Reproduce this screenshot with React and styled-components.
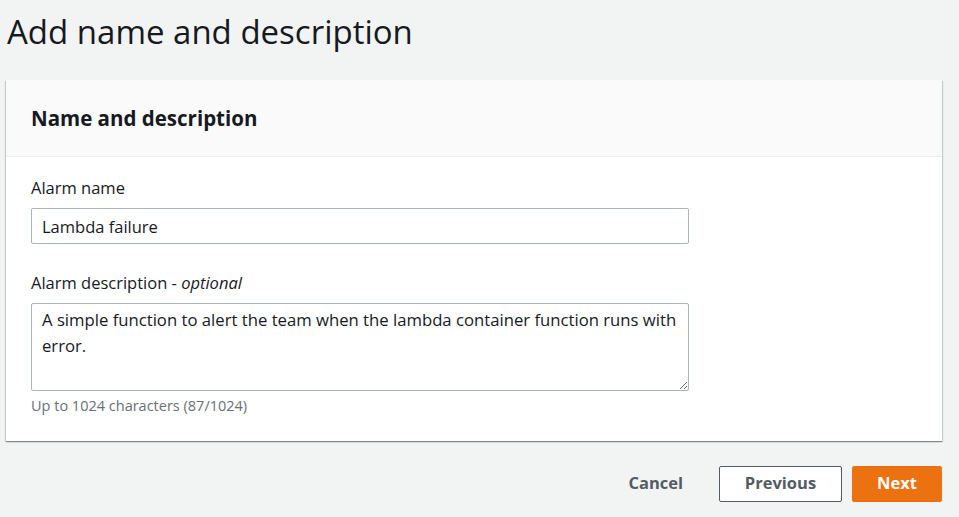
import styled, { createGlobalStyle } from 'styled-components';

const GlobalStyle = createGlobalStyle`
  html, body {
    margin: 0;
    padding: 0;
    background: #f2f3f3;
  }
  body {
    font-family: "Open Sans", Roboto, sans-serif;
    color: #16191f;
  }
  * { box-sizing: border-box; }
`;

export default function App() {
  return (
    <>
      <GlobalStyle />
      <Page>
        <Title>Add name and description</Title>
        <Card>
          <CardHeader>
            <CardTitle>Name and description</CardTitle>
          </CardHeader>
          <CardBody>
            <Field>
              <Label>Alarm name</Label>
              <Input defaultValue="Lambda failure" />
            </Field>
            <Field>
              <Label>
                Alarm description - <em>optional</em>
              </Label>
              <TextArea
                defaultValue="A simple function to alert the team when the lambda container function runs with error."
              />
              <Hint>Up to 1024 characters (87/1024)</Hint>
            </Field>
          </CardBody>
        </Card>
        <Actions>
          <Button variant="link">Cancel</Button>
          <Button variant="normal">Previous</Button>
          <Button variant="primary">Next</Button>
        </Actions>
      </Page>
    </>
  );
}

const Page = styled.div`
  width: 959px;
  height: 517px;
  padding: 12px 17px 0 6px;
  display: flex;
  flex-direction: column;
`;

const Title = styled.h1`
  margin: 0 0 0 1px;
  font-size: 33px;
  font-weight: 400;
  line-height: 40px;
  color: #16191f;
`;

const Card = styled.div`
  margin-top: 28px;
  background: #fff;
  box-shadow: 0 1px 1px 0 rgba(0, 28, 36, 0.3), 1px 1px 1px 0 rgba(0, 28, 36, 0.15),
    -1px 1px 1px 0 rgba(0, 28, 36, 0.15);
  height: 361px;
`;

const CardHeader = styled.div`
  height: 77px;
  background: #fafafa;
  border-bottom: 1px solid #eaeded;
  display: flex;
  align-items: center;
  padding: 0 25px;
`;

const CardTitle = styled.h2`
  margin: 0;
  font-size: 20.5px;
  font-weight: 700;
  color: #16191f;
`;

const CardBody = styled.div`
  padding: 20px 25px;
  display: flex;
  flex-direction: column;
  gap: 28px;
`;

const Field = styled.div`
  display: flex;
  flex-direction: column;
`;

const Label = styled.label`
  font-size: 16.5px;
  line-height: 22px;
  color: #16191f;
  margin-bottom: 9px;

  em {
    font-style: italic;
  }
`;

const Input = styled.input`
  width: 658px;
  height: 36px;
  border: 1px solid #aab7b8;
  border-radius: 2px;
  padding: 0 10px;
  font-family: inherit;
  font-size: 16.5px;
  color: #16191f;
  background: #fff;
  outline: none;
`;

const TextArea = styled.textarea`
  width: 658px;
  height: 88px;
  border: 1px solid #aab7b8;
  border-radius: 2px;
  padding: 3px 10px;
  font-family: inherit;
  font-size: 16.7px;
  line-height: 26px;
  color: #16191f;
  background: #fff;
  outline: none;
  resize: vertical;
`;

const Hint = styled.div`
  margin-top: 6px;
  font-size: 14.5px;
  line-height: 18px;
  color: #687078;
`;

const Actions = styled.div`
  display: flex;
  justify-content: flex-end;
  align-items: center;
  gap: 10px;
  margin-top: 25px;
`;

const Button = styled.button`
  height: 36px;
  padding: 0 20px 3px;
  font-family: inherit;
  font-size: 16.5px;
  font-weight: 700;
  border-radius: 2px;
  cursor: pointer;
  border: 1px solid
    ${(p) => (p.variant === 'normal' ? '#545b64' : p.variant === 'primary' ? '#ec7211' : 'transparent')};
  background: ${(p) => (p.variant === 'primary' ? '#ec7211' : p.variant === 'normal' ? '#fff' : 'transparent')};
  color: ${(p) => (p.variant === 'primary' ? '#fff' : '#545b64')};
  min-width: ${(p) => (p.variant === 'normal' ? '123px' : p.variant === 'primary' ? '90px' : 'auto')};
  margin-right: ${(p) => (p.variant === 'link' ? '5px' : '0')};
`;
